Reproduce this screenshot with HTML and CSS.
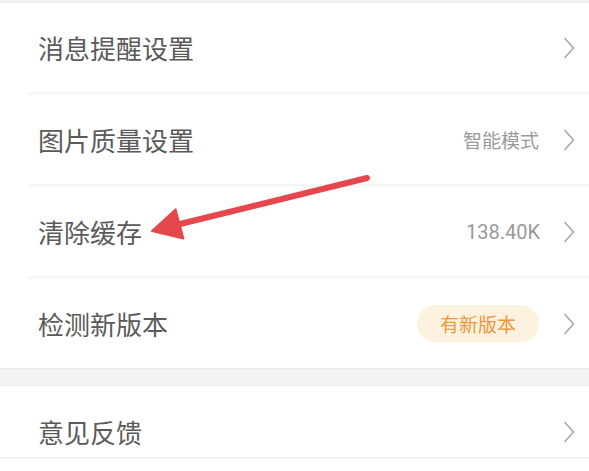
FILE: index.html
```html
<!DOCTYPE html>
<html lang="zh-CN">
<head>
<meta charset="utf-8">
<link rel="stylesheet" href="styles.css">
</head>
<body>
<div class="page">
  <div class="top-strip"></div>
  <div class="group">
    <div class="row">
      <span class="label">消息提醒设置</span>
      <span class="right">
        <svg class="chev" viewBox="0 0 12 22"><polyline points="1.5,1 10.5,11 1.5,21"/></svg>
      </span>
    </div>
    <div class="row">
      <span class="label">图片质量设置</span>
      <span class="right">
        <span class="value">智能模式</span>
        <svg class="chev" viewBox="0 0 12 22"><polyline points="1.5,1 10.5,11 1.5,21"/></svg>
      </span>
    </div>
    <div class="row">
      <span class="label">清除缓存</span>
      <span class="right">
        <span class="value num">138.40K</span>
        <svg class="chev" viewBox="0 0 12 22"><polyline points="1.5,1 10.5,11 1.5,21"/></svg>
      </span>
    </div>
    <div class="row no-border">
      <span class="label">检测新版本</span>
      <span class="right">
        <span class="badge">有新版本</span>
        <svg class="chev" viewBox="0 0 12 22"><polyline points="1.5,1 10.5,11 1.5,21"/></svg>
      </span>
    </div>
  </div>
  <div class="band"></div>
  <div class="group">
    <div class="row last">
      <span class="label">意见反馈</span>
      <span class="right">
        <svg class="chev" viewBox="0 0 12 22"><polyline points="1.5,1 10.5,11 1.5,21"/></svg>
      </span>
    </div>
  </div>
  <svg class="arrow" viewBox="0 0 589 471">
    <line x1="367" y1="178" x2="176" y2="225" />
    <polygon points="152,231 175.6,209.4 183.4,238.6" />
  </svg>
</div>
</body>
</html>
```
FILE: styles.css
```css
html, body {
  margin: 0;
  padding: 0;
  background: #ffffff;
}
.page {
  position: relative;
  width: 589px;
  height: 471px;
  overflow: hidden;
  font-family: "Noto Sans CJK SC", "Noto Sans", sans-serif;
  background: #ffffff;
}
.top-strip {
  height: 3px;
  background: #f1f1f1;
}
.group {
  background: #ffffff;
}
.row {
  display: flex;
  align-items: center;
  justify-content: space-between;
  height: 89px;
  margin-left: 27px;
  padding-left: 11px;
  padding-right: 14px;
  border-bottom: 3px solid #f6f6f6;
}
.row.no-border {
  border-bottom: none;
}
.row.last {
  margin-left: 0;
  padding-left: 38px;
  height: 50px;
  padding-top: 21px;
  border-bottom: 2px solid #f2f2f2;
}
.label {
  font-size: 26px;
  color: #5a5a5a;
  line-height: 1;
}
.right {
  display: flex;
  align-items: center;
}
.value {
  font-size: 19px;
  color: #9a9a9a;
  margin-right: 24px;
  line-height: 1;
}
.value.num {
  font-family: "Roboto", "Noto Sans", sans-serif;
  font-size: 20px;
  margin-right: 23px;
}
.badge {
  display: flex;
  align-items: center;
  height: 37px;
  padding: 0 23px;
  border-radius: 19px;
  background: #fdf2df;
  color: #ec983c;
  font-size: 19px;
  margin-right: 24px;
}
.chev {
  width: 12px;
  height: 22px;
  fill: none;
  stroke: #a6a6a6;
  stroke-width: 1.5;
  stroke-linejoin: miter;
}
.band {
  height: 16px;
  background: #f3f3f3;
  border-top: 1px solid #ebebeb;
  border-bottom: 1px solid #ebebeb;
}
.arrow {
  position: absolute;
  left: 0;
  top: 0;
  width: 589px;
  height: 471px;
  pointer-events: none;
}
.arrow line {
  stroke: #e5474d;
  stroke-width: 6;
  stroke-linecap: round;
}
.arrow polygon {
  fill: #e5474d;
  stroke: #e5474d;
  stroke-width: 2;
  stroke-linejoin: round;
}
```
